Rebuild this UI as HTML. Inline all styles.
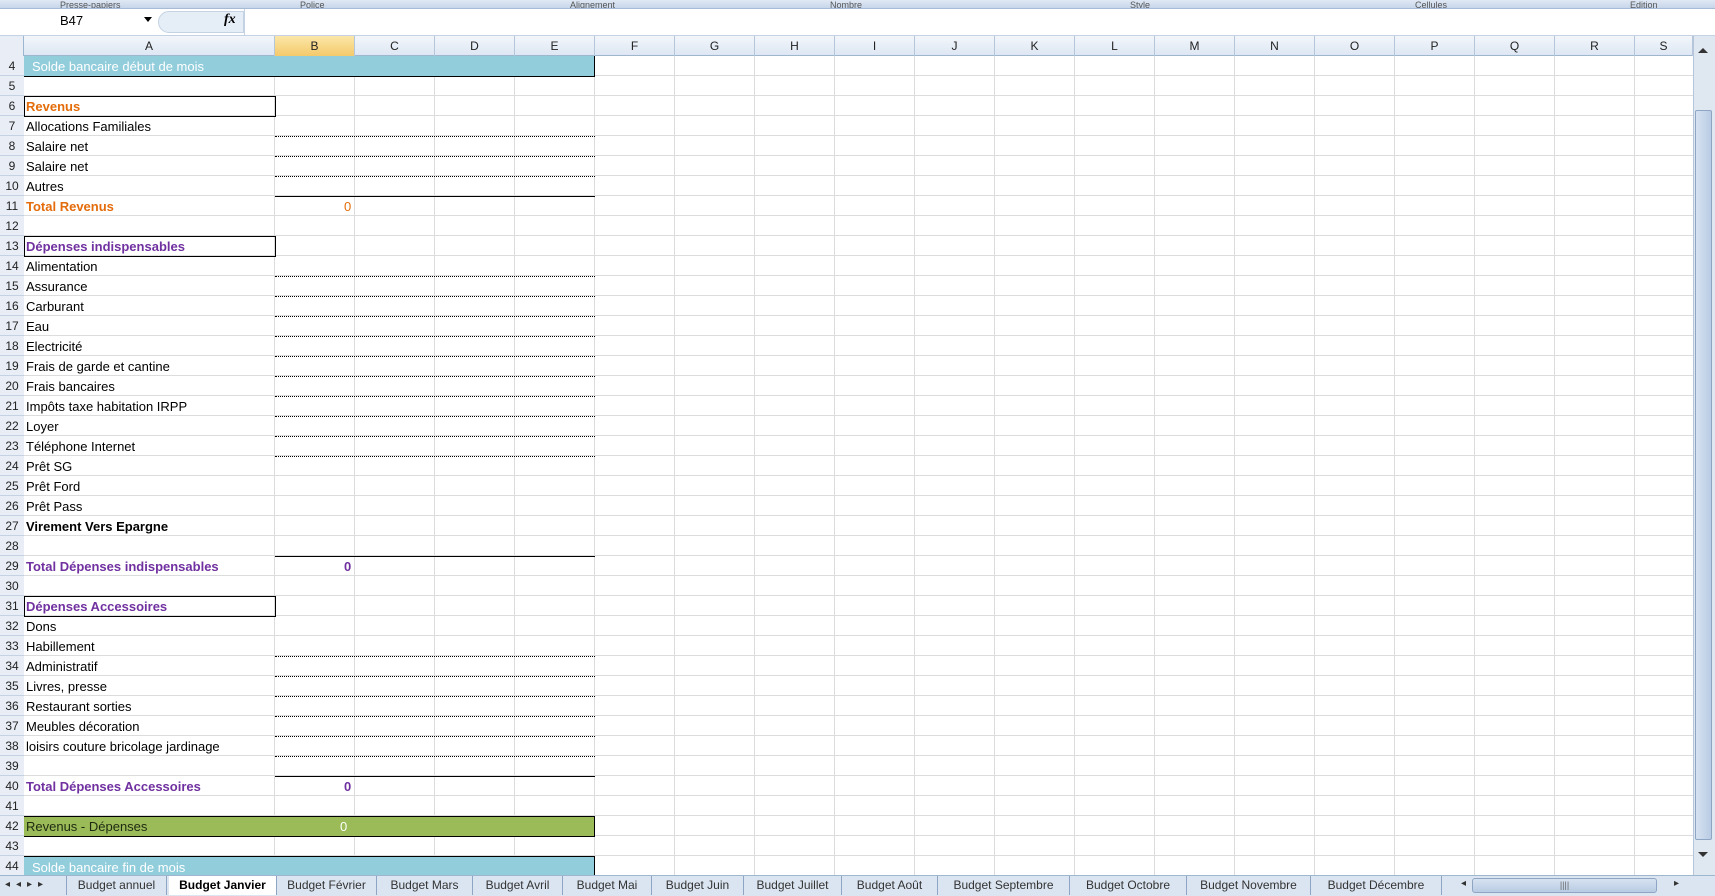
<!DOCTYPE html>
<html><head><meta charset="utf-8"><style>
*{margin:0;padding:0;box-sizing:border-box}
body{width:1715px;height:896px;overflow:hidden;background:#fff;font-family:"Liberation Sans",sans-serif;font-size:13px;position:relative}
.abs{position:absolute}
.ribbon{left:0;top:0;width:1715px;height:9px;background:linear-gradient(#dfe8f4,#c7d6ea);border-bottom:1px solid #a7bbd6;font-size:9px;color:#555;overflow:hidden}
.fbar{left:0;top:9px;width:1715px;height:27px;background:#fff;border-bottom:1px solid #c5d2e3}
.grid{left:24px;top:56px;width:1669px;height:819px;
background:
repeating-linear-gradient(to bottom,transparent 0 19px,#dadcdd 19px 20px),
linear-gradient(to right,transparent 0 250px,#dadcdd 250px 251px,transparent 251px);}
.gridr{left:275px;top:56px;width:1418px;height:819px;background:repeating-linear-gradient(to right,transparent 0 79px,#dadcdd 79px 80px)}
.rh{left:0;top:36px;width:24px;height:839px;background:#e9eef6;border-right:1px solid #9eb6ce}
.rn{position:absolute;left:0;width:24px;height:20px;line-height:20px;text-align:center;font-size:12px;color:#222;border-bottom:1px solid #c5d2e3;background:#e9eef6}
.ch{top:36px;left:0;width:1693px;height:20px;background:linear-gradient(#f3f6fb,#dde7f3);border-bottom:1px solid #9eb6ce}
.cl{position:absolute;top:0;height:20px;line-height:20px;text-align:center;font-size:12px;color:#222;border-right:1px solid #b6c6da}
.c{position:absolute;left:26px;height:20px;line-height:21px;white-space:nowrap;color:#000}
.dot{position:absolute;left:275px;width:320px;border-top:1px dotted #000}
.sol{position:absolute;left:275px;width:320px;border-top:1px solid #000}
.box{position:absolute;left:24px;width:252px;height:21px;border:1px solid #000}
.tabs{left:0;top:875px;width:1715px;height:21px;background:#dbe5f1;border-top:1px solid #9eb6ce}
.tab{position:absolute;top:0;height:19px;line-height:18px;font-size:12px;color:#333;text-align:center;border-right:1px solid #8ea6c4}
</style></head><body>
<div class="abs ribbon"><span style="position:absolute;left:60px">Presse-papiers</span><span style="position:absolute;left:300px">Police</span><span style="position:absolute;left:570px">Alignement</span><span style="position:absolute;left:830px">Nombre</span><span style="position:absolute;left:1130px">Style</span><span style="position:absolute;left:1415px">Cellules</span><span style="position:absolute;left:1630px">Edition</span></div>
<div class="abs fbar">
 <div class="abs" style="left:60px;top:4px;font-size:13px">B47</div>
 <div class="abs" style="left:144px;top:8px;width:0;height:0;border-left:4px solid transparent;border-right:4px solid transparent;border-top:5px solid #000"></div>
 <div class="abs" style="left:158px;top:2px;width:86px;height:22px;border-radius:11px 0 0 11px;background:#e5edf7;border:1px solid #c5d2e3"></div>
 <div class="abs" style="left:224px;top:3px;font-family:'Liberation Serif',serif;font-style:italic;font-weight:bold;font-size:14px">fx</div>
 <div class="abs" style="left:244px;top:0;width:1px;height:26px;background:#c5d2e3"></div>
</div>
<div class="abs ch">
 <div class="abs" style="left:0;top:0;width:24px;height:20px;background:#e4ebf5;border-right:1px solid #9eb6ce"></div>
 <div class="abs" style="left:8px;top:5px;width:0;height:0;border-left:10px solid transparent;border-bottom:10px solid #b5c5d8"></div>
 <div class="cl" style="left:24px;width:251px">A</div>
 <div class="cl" style="left:275px;width:80px;background:linear-gradient(#fbe7a8,#f4c96a)">B</div>
 <div class="cl" style="left:355px;width:80px">C</div><div class="cl" style="left:435px;width:80px">D</div><div class="cl" style="left:515px;width:80px">E</div><div class="cl" style="left:595px;width:80px">F</div><div class="cl" style="left:675px;width:80px">G</div><div class="cl" style="left:755px;width:80px">H</div><div class="cl" style="left:835px;width:80px">I</div><div class="cl" style="left:915px;width:80px">J</div><div class="cl" style="left:995px;width:80px">K</div><div class="cl" style="left:1075px;width:80px">L</div><div class="cl" style="left:1155px;width:80px">M</div><div class="cl" style="left:1235px;width:80px">N</div><div class="cl" style="left:1315px;width:80px">O</div><div class="cl" style="left:1395px;width:80px">P</div><div class="cl" style="left:1475px;width:80px">Q</div><div class="cl" style="left:1555px;width:80px">R</div><div class="cl" style="left:1635px;width:58px">S</div>
</div>
<div class="abs grid"></div><div class="abs gridr"></div>
<div class="abs rh">
<div class="rn" style="top:20px">4</div><div class="rn" style="top:40px">5</div><div class="rn" style="top:60px">6</div><div class="rn" style="top:80px">7</div><div class="rn" style="top:100px">8</div><div class="rn" style="top:120px">9</div><div class="rn" style="top:140px">10</div><div class="rn" style="top:160px">11</div><div class="rn" style="top:180px">12</div><div class="rn" style="top:200px">13</div><div class="rn" style="top:220px">14</div><div class="rn" style="top:240px">15</div><div class="rn" style="top:260px">16</div><div class="rn" style="top:280px">17</div><div class="rn" style="top:300px">18</div><div class="rn" style="top:320px">19</div><div class="rn" style="top:340px">20</div><div class="rn" style="top:360px">21</div><div class="rn" style="top:380px">22</div><div class="rn" style="top:400px">23</div><div class="rn" style="top:420px">24</div><div class="rn" style="top:440px">25</div><div class="rn" style="top:460px">26</div><div class="rn" style="top:480px">27</div><div class="rn" style="top:500px">28</div><div class="rn" style="top:520px">29</div><div class="rn" style="top:540px">30</div><div class="rn" style="top:560px">31</div><div class="rn" style="top:580px">32</div><div class="rn" style="top:600px">33</div><div class="rn" style="top:620px">34</div><div class="rn" style="top:640px">35</div><div class="rn" style="top:660px">36</div><div class="rn" style="top:680px">37</div><div class="rn" style="top:700px">38</div><div class="rn" style="top:720px">39</div><div class="rn" style="top:740px">40</div><div class="rn" style="top:760px">41</div><div class="rn" style="top:780px">42</div><div class="rn" style="top:800px">43</div><div class="rn" style="top:820px">44</div>
</div>

<!-- fills -->
<div class="abs" style="left:24px;top:56px;width:571px;height:21px;background:#92cddc;border-bottom:1px solid #000;border-right:1px solid #000"></div>
<div class="c" style="top:56px;left:32px;color:#fff">Solde bancaire début de mois</div>
<div class="abs" style="left:24px;top:816px;width:571px;height:21px;background:#9bbb59;border:1px solid #000;border-left:none"></div>
<div class="c" style="top:816px;color:#1e2a10">Revenus - Dépenses</div>
<div class="c" style="top:816px;left:340px;color:#fff">0</div>
<div class="abs" style="left:24px;top:856px;width:571px;height:19px;background:#92cddc;border-top:1px solid #000;border-right:1px solid #000"></div>
<div class="c" style="top:857px;left:32px;color:#fff">Solde bancaire fin de mois</div>

<div class="box" style="top:96px"></div><div class="box" style="top:236px"></div><div class="box" style="top:596px"></div>

<div class="dot" style="top:136px"></div><div class="dot" style="top:156px"></div><div class="dot" style="top:176px"></div><div class="sol" style="top:196px"></div>
<div class="dot" style="top:276px"></div><div class="dot" style="top:296px"></div><div class="dot" style="top:316px"></div><div class="dot" style="top:336px"></div><div class="dot" style="top:356px"></div><div class="dot" style="top:376px"></div><div class="dot" style="top:396px"></div><div class="dot" style="top:416px"></div><div class="dot" style="top:436px"></div><div class="dot" style="top:456px"></div><div class="sol" style="top:556px"></div>
<div class="dot" style="top:656px"></div><div class="dot" style="top:676px"></div><div class="dot" style="top:696px"></div><div class="dot" style="top:716px"></div><div class="dot" style="top:736px"></div><div class="dot" style="top:756px"></div><div class="sol" style="top:776px"></div>

<div class="c" style="top:96px;color:#e46c0a;font-weight:bold">Revenus</div>
<div class="c" style="top:116px">Allocations Familiales</div>
<div class="c" style="top:136px">Salaire net</div>
<div class="c" style="top:156px">Salaire net</div>
<div class="c" style="top:176px">Autres</div>
<div class="c" style="top:196px;color:#e46c0a;font-weight:bold">Total Revenus</div>
<div class="c" style="top:196px;left:344px;color:#e46c0a">0</div>
<div class="c" style="top:236px;color:#7030a0;font-weight:bold">Dépenses indispensables</div>
<div class="c" style="top:256px">Alimentation</div>
<div class="c" style="top:276px">Assurance</div>
<div class="c" style="top:296px">Carburant</div>
<div class="c" style="top:316px">Eau</div>
<div class="c" style="top:336px">Electricité</div>
<div class="c" style="top:356px">Frais de garde et cantine</div>
<div class="c" style="top:376px">Frais bancaires</div>
<div class="c" style="top:396px">Impôts taxe habitation IRPP</div>
<div class="c" style="top:416px">Loyer</div>
<div class="c" style="top:436px">Téléphone Internet</div>
<div class="c" style="top:456px">Prêt SG</div>
<div class="c" style="top:476px">Prêt Ford</div>
<div class="c" style="top:496px">Prêt Pass</div>
<div class="c" style="top:516px;font-weight:bold">Virement Vers Epargne</div>
<div class="c" style="top:556px;color:#7030a0;font-weight:bold">Total Dépenses indispensables</div>
<div class="c" style="top:556px;left:344px;color:#7030a0;font-weight:bold">0</div>
<div class="c" style="top:596px;color:#7030a0;font-weight:bold">Dépenses Accessoires</div>
<div class="c" style="top:616px">Dons</div>
<div class="c" style="top:636px">Habillement</div>
<div class="c" style="top:656px">Administratif</div>
<div class="c" style="top:676px">Livres, presse</div>
<div class="c" style="top:696px">Restaurant sorties</div>
<div class="c" style="top:716px">Meubles décoration</div>
<div class="c" style="top:736px">loisirs couture bricolage jardinage</div>
<div class="c" style="top:776px;color:#7030a0;font-weight:bold">Total Dépenses Accessoires</div>
<div class="c" style="top:776px;left:344px;color:#7030a0;font-weight:bold">0</div>

<!-- vertical scrollbar -->
<div class="abs" style="left:1693px;top:36px;width:22px;height:839px;background:#dfe7f1;border-left:1px solid #b6c6da"></div>
<div class="abs" style="left:1695px;top:110px;width:17px;height:730px;background:linear-gradient(to right,#d6e2f1,#b9cce4);border:1px solid #8ea6c4;border-radius:2px"></div>
<div class="abs" style="left:1698px;top:852px;width:0;height:0;border-left:5px solid transparent;border-right:5px solid transparent;border-top:5px solid #333"></div>
<div class="abs" style="left:1698px;top:48px;width:0;height:0;border-left:5px solid transparent;border-right:5px solid transparent;border-bottom:5px solid #333"></div>

<!-- tabs -->
<div class="abs tabs">
 <div class="abs" style="left:5px;top:3px;font-size:10px;color:#333;letter-spacing:6px">◂◂▸▸</div>
 <div class="tab" style="left:66px;width:101px;border-left:1px solid #8ea6c4">Budget annuel</div>
 <div class="tab" style="left:169px;width:108px;background:#fff;font-weight:bold;color:#000">Budget Janvier</div>
 <div class="tab" style="left:277px;width:100px">Budget Février</div>
 <div class="tab" style="left:377px;width:96px">Budget Mars</div>
 <div class="tab" style="left:473px;width:90px">Budget Avril</div>
 <div class="tab" style="left:563px;width:89px">Budget Mai</div>
 <div class="tab" style="left:652px;width:92px">Budget Juin</div>
 <div class="tab" style="left:744px;width:98px">Budget Juillet</div>
 <div class="tab" style="left:842px;width:96px">Budget Août</div>
 <div class="tab" style="left:938px;width:132px">Budget Septembre</div>
 <div class="tab" style="left:1070px;width:117px">Budget Octobre</div>
 <div class="tab" style="left:1187px;width:124px">Budget Novembre</div>
 <div class="tab" style="left:1311px;width:131px">Budget Décembre</div>
 <div class="abs" style="left:1461px;top:2px;font-size:10px;color:#333">◂</div>
 <div class="abs" style="left:1472px;top:2px;width:185px;height:15px;background:linear-gradient(#d6e2f1,#b9cce4);border:1px solid #8ea6c4;border-radius:3px;text-align:center;font-size:9px;line-height:13px;color:#666">||||</div>
 <div class="abs" style="left:1674px;top:2px;font-size:10px;color:#333">▸</div>
</div>
</body></html>
